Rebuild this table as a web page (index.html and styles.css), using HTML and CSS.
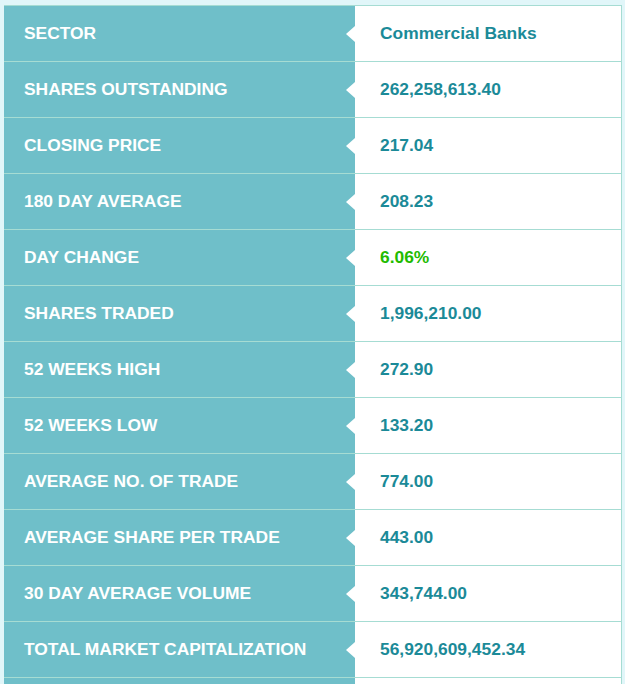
FILE: index.html
```html
<!DOCTYPE html>
<html>
<head>
<meta charset="utf-8">
<link rel="stylesheet" href="styles.css">
</head>
<body>
<div class="stats">
  <div class="row"><div class="label">SECTOR</div><div class="value">Commercial Banks</div></div>
  <div class="row"><div class="label">SHARES OUTSTANDING</div><div class="value">262,258,613.40</div></div>
  <div class="row"><div class="label">CLOSING PRICE</div><div class="value">217.04</div></div>
  <div class="row"><div class="label">180 DAY AVERAGE</div><div class="value">208.23</div></div>
  <div class="row"><div class="label">DAY CHANGE</div><div class="value up">6.06%</div></div>
  <div class="row"><div class="label">SHARES TRADED</div><div class="value">1,996,210.00</div></div>
  <div class="row"><div class="label">52 WEEKS HIGH</div><div class="value">272.90</div></div>
  <div class="row"><div class="label">52 WEEKS LOW</div><div class="value">133.20</div></div>
  <div class="row"><div class="label">AVERAGE NO. OF TRADE</div><div class="value">774.00</div></div>
  <div class="row"><div class="label">AVERAGE SHARE PER TRADE</div><div class="value">443.00</div></div>
  <div class="row"><div class="label">30 DAY AVERAGE VOLUME</div><div class="value">343,744.00</div></div>
  <div class="row"><div class="label">TOTAL MARKET CAPITALIZATION</div><div class="value">56,920,609,452.34</div></div>
  <div class="row"><div class="label"></div><div class="value"></div></div>
</div>
</body>
</html>
```
FILE: styles.css
```css
html, body {
  margin: 0;
  padding: 0;
  background: #e1f6f9;
}
body {
  padding: 5px 3px 0 4px;
  font-family: "Liberation Sans", Arial, sans-serif;
  font-weight: bold;
  font-size: 17.4px;
}
.stats {
  border-top: 1px solid #a6dcd3;
  border-right: 1px solid #a6dcd3;
  background: #ffffff;
}
.row {
  display: grid;
  grid-template-columns: 351px 1fr;
  height: 55px;
  border-bottom: 1px solid #a6dcd3;
}
.label {
  position: relative;
  background: #6fbfc9;
  color: #ffffff;
  display: flex;
  align-items: center;
  padding-left: 20px;
}
.label::after {
  content: "";
  position: absolute;
  right: 0;
  top: 50%;
  margin-top: -8px;
  border-style: solid;
  border-width: 8px 9px 8px 0;
  border-color: transparent #ffffff transparent transparent;
}
.value {
  display: flex;
  align-items: center;
  padding-left: 25px;
  color: #1b8a98;
}
.value.up {
  color: #22bb00;
}
```
